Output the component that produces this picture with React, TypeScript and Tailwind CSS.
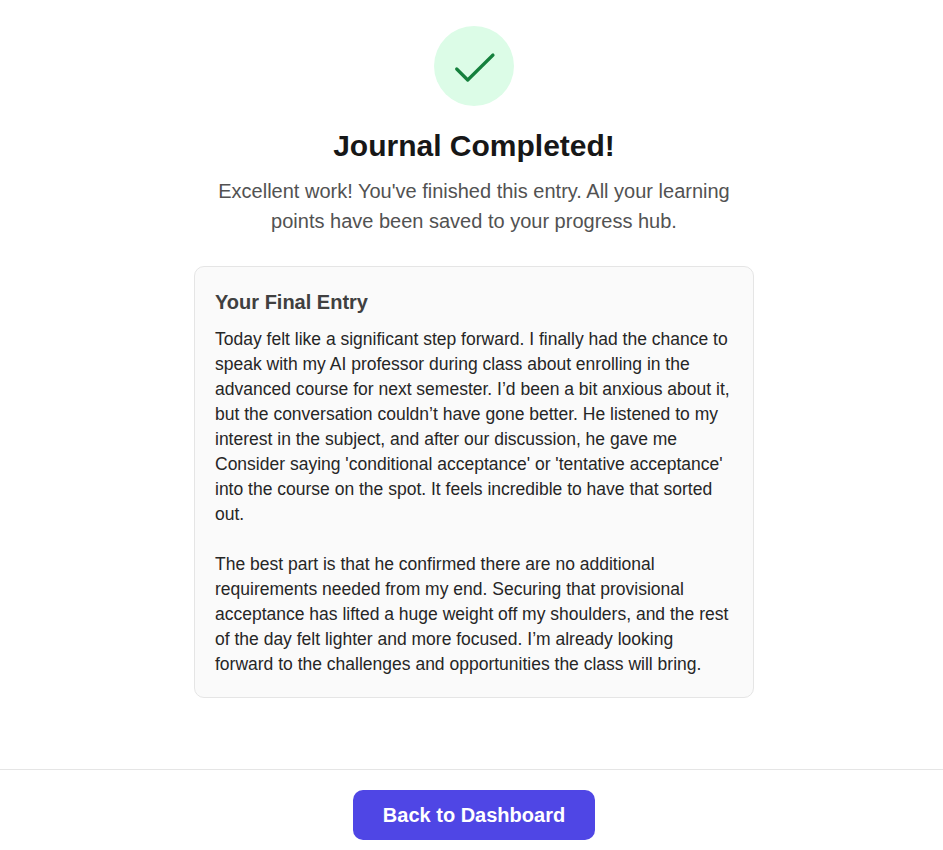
export default function App() {
  return (
    <main className="flex h-[850px] w-[943px] flex-col overflow-hidden bg-white font-['Liberation_Sans',Arial,sans-serif]">
      <section className="flex h-[769px] flex-col items-center pt-[26px] pl-[5px]">
        <div className="flex size-20 shrink-0 items-center justify-center rounded-full bg-[#dcfce7]">
          <svg width="50" height="50" viewBox="0 0 50 50" fill="none" stroke="#15803d" strokeWidth="3.2" strokeLinecap="round" strokeLinejoin="round">
            <path d="M7.7 28L18.7 39L44 14" />
          </svg>
        </div>
        <h1 className="mt-5 text-[30px] leading-10 font-bold text-[#171717]">Journal Completed!</h1>
        <p className="mt-[10px] w-[560px] text-center text-[20px] leading-[30px] text-[#525252]">
          Excellent work! You've finished this entry. All your learning<br />points have been saved to your progress hub.
        </p>
        <article className="mt-[30px] h-[432px] w-[560px] shrink-0 rounded-[10px] border border-[#e5e5e5] bg-[#fafafa] px-5 pt-5">
          <h2 className="text-[20px] leading-[30px] font-bold text-[#404040]">Your Final Entry</h2>
          <p className="mt-[10px] text-[17.5px] leading-[25px] whitespace-nowrap text-[#262626]">
            Today felt like a significant step forward. I finally had the chance to<br />
            speak with my AI professor during class about enrolling in the<br />
            advanced course for next semester. I’d been a bit anxious about it,<br />
            but the conversation couldn’t have gone better. He listened to my<br />
            interest in the subject, and after our discussion, he gave me<br />
            Consider saying 'conditional acceptance' or 'tentative acceptance'<br />
            into the course on the spot. It feels incredible to have that sorted<br />
            out.<br /><br />
            The best part is that he confirmed there are no additional<br />
            requirements needed from my end. Securing that provisional<br />
            acceptance has lifted a huge weight off my shoulders, and the rest<br />
            of the day felt lighter and more focused. I’m already looking<br />
            forward to the challenges and opportunities the class will bring.
          </p>
        </article>
      </section>
      <footer className="flex flex-1 items-start justify-center border-t border-[#e5e5e5] pt-5 pl-[5px]">
        <button className="h-[50px] w-[242px] rounded-[10px] bg-[#4f46e5] text-[20px] font-bold text-white">Back to Dashboard</button>
      </footer>
    </main>
  );
}
